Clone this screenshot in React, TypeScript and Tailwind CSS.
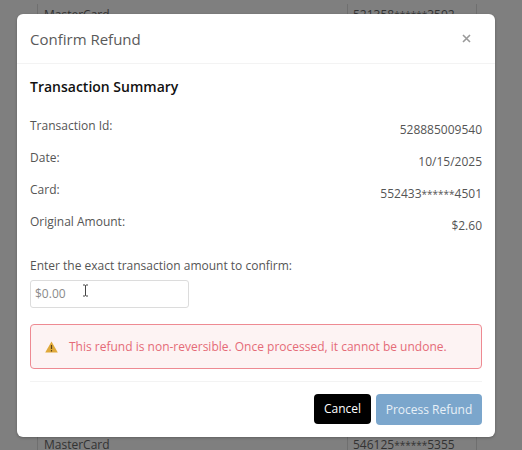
import React from "react";

const rows: [string, React.ReactNode][] = [
  ["Transaction Id:", "528885009540"],
  ["Date:", "10/15/2025"],
  ["Card:", <Masked a="552433" b="4501" />],
  ["Original Amount:", "$2.60"],
];

function Masked({ a, b }: { a: string; b: string }) {
  return (
    <>
      {a}
      <span className="text-[10px]">******</span>
      {b}
    </>
  );
}

function BackRow({ a, pre, post }: { a: string; pre: string; post: string }) {
  return (
    <div className="flex h-[22px] border-x border-b border-[#6f6f6f]">
      <div className="w-[310px] pl-[6px] border-r border-[#6f6f6f] leading-[22px]">{a}</div>
      <div className="flex-1 pl-[5px] leading-[22px]">
        <Masked a={pre} b={post} />
      </div>
    </div>
  );
}

export default function App() {
  return (
    <div
      className="relative w-[522px] h-[450px] overflow-hidden bg-[#7f7f7f] text-[12px] text-[#333]"
      style={{ fontFamily: '"Open Sans", "Noto Sans", sans-serif' }}
    >
      <div className="absolute left-[37px] top-[4px] w-[440px]">
        <BackRow a="MasterCard" pre="521358" post="3592" />
      </div>
      <div className="absolute left-[37px] top-[434px] w-[440px]">
        <BackRow a="MasterCard" pre="546125" post="5355" />
      </div>

      <div className="absolute left-[17px] top-[14px] w-[478px] h-[423px] bg-white rounded-[6px] flex flex-col shadow-[0_1px_3px_rgba(0,0,0,0.25)]">
        <div className="h-[50px] shrink-0 flex items-center justify-between pl-[13px] pr-[24px] border-b border-[#f3f3f3]">
          <span className="pt-[2px] text-[15px] text-[#5a5a5a] leading-none">Confirm Refund</span>
          <svg width="9" height="9" viewBox="0 0 9 9" className="text-[#9a9a9a]">
            <path d="M1 1 L8 8 M8 1 L1 8" stroke="currentColor" strokeWidth="1.6" />
          </svg>
        </div>

        <div className="flex-1 flex flex-col px-[13px]">
          <h2 className="mt-[13px] text-[14px] leading-[20px] font-semibold text-[#111]">Transaction Summary</h2>

          <div className="mt-[17px] flex flex-col">
            {rows.map(([k, v]) => (
              <div key={k} className="h-[32px] flex justify-between text-[#555]">
                <span className="leading-[24px]">{k}</span>
                <span className="leading-[32px]">{v}</span>
              </div>
            ))}
          </div>

          <label className="mt-[15px] leading-[18px] text-[#555]">Enter the exact transaction amount to confirm:</label>
          <div className="relative mt-[5px] w-[159px] h-[28px] border border-[#dcdcdc] rounded-[3px] flex items-center pl-[4px] text-[#8a8a8a]">
            $0.00
            <svg width="7" height="13" viewBox="0 0 7 13" className="absolute left-[51px] top-[3px] text-[#444]">
              <path d="M1 1 H3 L3.5 1.5 L4 1 H6 M3.5 1.5 V11.5 M1 12 H3 L3.5 11.5 L4 12 H6" stroke="currentColor" strokeWidth="1" fill="none" />
            </svg>
          </div>

          <div className="mt-[16px] h-[45px] flex items-center gap-[11px] pl-[14px] border border-[#ee8a92] rounded-[4px] bg-[#fdf3f3] text-[#e56b77]">
            <svg width="13" height="12" viewBox="0 0 13 12">
              <path d="M6.5 0.5 L12.8 11.5 H0.2 Z" fill="#e0a93a" />
              <path d="M6.5 4 V8 M6.5 9 V10.5" stroke="#5a4318" strokeWidth="1.2" />
            </svg>
            <span>This refund is non-reversible. Once processed, it cannot be undone.</span>
          </div>

          <div className="mt-[12px] border-t border-[#f3f3f3] pt-[12px] flex justify-end gap-[5px]">
            <button className="w-[57px] h-[30px] rounded-[4px] bg-black text-white">Cancel</button>
            <button className="w-[106px] h-[31px] rounded-[4px] bg-[#7ba6cc] text-[#e8f0f7]">Process Refund</button>
          </div>
        </div>
      </div>
    </div>
  );
}
